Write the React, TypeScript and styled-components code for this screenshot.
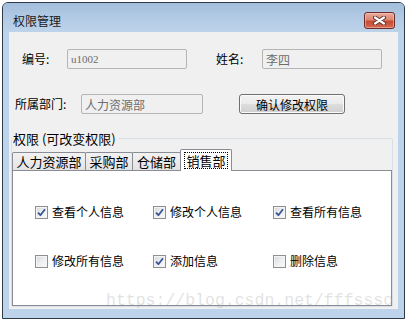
import React from "react";
import styled, { createGlobalStyle } from "styled-components";

const Global = createGlobalStyle`
  html, body { margin: 0; padding: 0; background: #ffffff; }
  body { font-family: "Noto Sans CJK SC", "Liberation Sans", sans-serif; font-size: 12px; color: #000; }
`;

const Window = styled.div`
  position: relative;
  box-sizing: border-box;
  margin: 2px 0 0 2px;
  width: 403px;
  height: 317px;
  border: 1px solid #2e3b48;
  border-radius: 6px 6px 0 0;
  background: #bcd3eb;
  display: flex;
  flex-direction: column;
  overflow: hidden;
`;

const TitleBar = styled.div`
  box-sizing: border-box;
  height: 29px;
  padding: 6px 9px 0 10px;
  display: flex;
  align-items: center;
  justify-content: space-between;
  background: linear-gradient(to bottom, #a3bedb 0%, #b3cbe5 55%, #bdd3ea 100%);
`;

const Title = styled.span`
  font-size: 12px;
  line-height: 14px;
  color: #1a1a1a;
`;

const CloseButton = styled.div`
  box-sizing: border-box;
  width: 31px;
  height: 17px;
  border: 1px solid #6a2c2c;
  border-radius: 3px;
  background: linear-gradient(to bottom, #e9aa9b 0%, #dc8671 45%, #c74b33 55%, #d26a50 100%);
  box-shadow: inset 0 0 0 1px rgba(255, 220, 210, 0.45);
  display: flex;
  align-items: center;
  justify-content: center;
`;

const Body = styled.div`
  flex: 1;
  margin: 0 6px 9px 6px;
  background: #f0f0f0;
  display: flex;
  flex-direction: column;
  padding-top: 17px;
`;

const Row = styled.div<{ $top?: number; $left: number }>`
  display: flex;
  align-items: center;
  height: 20px;
  margin-top: ${(p) => p.$top ?? 0}px;
  padding-left: ${(p) => p.$left}px;
`;

const Label = styled.span<{ $w: number }>`
  width: ${(p) => p.$w}px;
  font-size: 12px;
  line-height: 14px;
  flex: none;
`;

const Field = styled.div<{ $w: number; $gap?: number; $latin?: boolean }>`
  box-sizing: border-box;
  width: ${(p) => p.$w}px;
  height: 20px;
  margin-right: ${(p) => p.$gap ?? 0}px;
  border: 1px solid #b5b5b5;
  border-radius: 2px;
  background: #f0f0f0;
  color: #6d6d6d;
  padding-left: 3px;
  display: flex;
  align-items: center;
  font-family: ${(p) => (p.$latin ? '"Liberation Serif", serif' : '"Noto Sans CJK SC", sans-serif')};
  font-size: ${(p) => (p.$latin ? 11 : 12)}px;
  flex: none;
`;

const Button = styled.div`
  box-sizing: border-box;
  width: 106px;
  height: 20px;
  border: 1px solid #707070;
  border-radius: 3px;
  background: linear-gradient(to bottom, #f2f2f2 0%, #ebebeb 48%, #dddddd 52%, #cfcfcf 100%);
  box-shadow: inset 0 0 0 1px #fbfbfb;
  display: flex;
  align-items: center;
  justify-content: center;
  font-size: 12px;
  flex: none;
`;

const Group = styled.fieldset`
  margin: 17px 0 0 2px;
  padding: 0;
  width: 380px;
  border: 1px solid #d5dfe5;
  border-radius: 2px;
  min-width: 0;
`;

const Legend = styled.legend`
  padding: 0 3px 0 1px;
  margin-left: 0;
  font-size: 13px;
  line-height: 15px;
`;

const TabStrip = styled.div`
  display: flex;
  align-items: flex-end;
  height: 21px;
  margin-top: 3px;
  position: relative;
  z-index: 1;
`;

const Tab = styled.div<{ $w: number; $active?: boolean }>`
  box-sizing: border-box;
  width: ${(p) => p.$w}px;
  height: ${(p) => (p.$active ? 22 : 18)}px;
  margin-bottom: ${(p) => (p.$active ? -1 : 0)}px;
  margin-left: -1px;
  &:first-child { margin-left: 0; }
  border: 1px solid #898c95;
  border-bottom: none;
  border-radius: 2px 2px 0 0;
  background: ${(p) => (p.$active ? "#ffffff" : "linear-gradient(to bottom, #f2f2f2, #e3e3e3)")};
  display: flex;
  align-items: center;
  justify-content: center;
  font-size: 13px;
  line-height: 15px;
  padding-bottom: ${(p) => (p.$active ? 1 : 0)}px;
`;

const Focus = styled.span`
  outline: 1px dotted #000;
  outline-offset: 0px;
  padding: 0 1px;
  line-height: 15px;
`;

const Panel = styled.div`
  box-sizing: border-box;
  height: 136px;
  border: 1px solid #898c95;
  background: #ffffff;
  display: grid;
  grid-template-columns: 118px 120px auto;
  grid-auto-rows: 16px;
  row-gap: 33px;
  padding: 33px 0 0 22px;
  align-content: start;
`;

const Check = styled.div`
  display: flex;
  align-items: center;
  gap: 4px;
  font-size: 12px;
  line-height: 14px;
`;

const Box = styled.span`
  box-sizing: border-box;
  width: 13px;
  height: 13px;
  border: 1px solid #8e8f8f;
  background: linear-gradient(135deg, #d4d6da 0%, #eceef0 50%, #fbfbfb 100%);
  box-shadow: inset 0 0 0 1px #f4f4f4;
  display: flex;
  align-items: center;
  justify-content: center;
  flex: none;
`;

const Watermark = styled.div`
  position: absolute;
  left: 103px;
  top: 288px;
  font-family: "Liberation Mono", "DejaVu Sans Mono", monospace;
  font-size: 16.5px;
  line-height: 20px;
  color: rgba(170, 170, 170, 0.35);
  white-space: nowrap;
  pointer-events: none;
`;

const CloseX = () => (
  <svg width="13" height="9" viewBox="0 0 13 9">
    <path d="M2 1.5 L11 7.5 M11 1.5 L2 7.5" stroke="#5a2f2f" strokeWidth="4" strokeLinecap="round" />
    <path d="M2 1.5 L11 7.5 M11 1.5 L2 7.5" stroke="#ffffff" strokeWidth="2.2" strokeLinecap="round" />
  </svg>
);

const Tick = () => (
  <svg width="9" height="9" viewBox="0 0 9 9">
    <path d="M1 4.6 L3.4 7.2 L8 1.2" fill="none" stroke="#3b5594" strokeWidth="1.8" strokeLinejoin="round" />
  </svg>
);

const perms = [
  { label: "查看个人信息", checked: true },
  { label: "修改个人信息", checked: true },
  { label: "查看所有信息", checked: true },
  { label: "修改所有信息", checked: false },
  { label: "添加信息", checked: true },
  { label: "删除信息", checked: false },
];

const tabs = [
  { name: "人力资源部", w: 74 },
  { name: "采购部", w: 48 },
  { name: "仓储部", w: 49 },
  { name: "销售部", w: 52, active: true },
];

export default function App() {
  return (
    <>
      <Global />
      <Window>
        <TitleBar>
          <Title>权限管理</Title>
          <CloseButton>
            <CloseX />
          </CloseButton>
        </TitleBar>
        <Body>
          <Row $left={13}>
            <Label $w={45}>编号:</Label>
            <Field $w={120} $gap={29} $latin>u1002</Field>
            <Label $w={46}>姓名:</Label>
            <Field $w={120}>李四</Field>
          </Row>
          <Row $left={6} $top={25}>
            <Label $w={66}>所属部门:</Label>
            <Field $w={122} $gap={36}>人力资源部</Field>
            <Button>确认修改权限</Button>
          </Row>
          <Group>
            <Legend>权限 (可改变权限)</Legend>
            <TabStrip>
              {tabs.map((t) => (
                <Tab key={t.name} $w={t.w} $active={t.active}>
                  {t.active ? <Focus>{t.name}</Focus> : t.name}
                </Tab>
              ))}
            </TabStrip>
            <Panel>
              {perms.map((p) => (
                <Check key={p.label}>
                  <Box>{p.checked && <Tick />}</Box>
                  {p.label}
                </Check>
              ))}
            </Panel>
          </Group>
        </Body>
        <Watermark>https://blog.csdn.net/fffssso</Watermark>
      </Window>
    </>
  );
}
